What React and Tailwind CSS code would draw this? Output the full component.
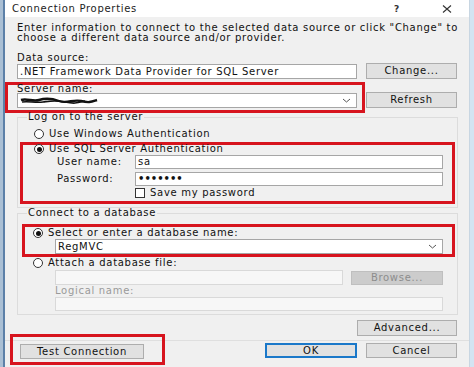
import React from "react";

function Radio({ checked }) {
  return (
    <span className="w-[10px] h-[10px] shrink-0 rounded-full border border-[#333] bg-white flex items-center justify-center">
      {checked && <span className="w-[5px] h-[5px] rounded-full bg-[#111]" />}
    </span>
  );
}

function Chevron() {
  return (
    <svg width="9" height="5" viewBox="0 0 9 5" className="ml-auto mr-[5px] shrink-0">
      <path d="M1 1 L4.5 4 L8 1" fill="none" stroke="#555" strokeWidth="1" />
    </svg>
  );
}

function Btn({ className = "", children }) {
  return (
    <div
      className={
        "border border-[#adadad] bg-[#e1e1e1] flex items-center justify-center leading-[10px] shrink-0 whitespace-nowrap " +
        className
      }
    >
      {children}
    </div>
  );
}

export default function App() {
  return (
    <div className="w-[474px] h-[367px] flex overflow-hidden font-['DejaVu_Sans',sans-serif] text-[10px] tracking-[0.7px] text-[#111]">
      <div className="w-[5px] bg-[#aabfd4] border-r-2 border-[#5c80a8]" />
      <div className="flex-1 flex flex-col bg-[#f0f0f0]">
        {/* title bar */}
        <div className="h-[17px] shrink-0 bg-white flex items-center pl-[7px]">
          <span className="text-[#222] leading-[10px]">Connection Properties</span>
          <div className="ml-auto mr-[17px] w-[58px] flex items-center justify-between">
            <span className="text-[#333] text-[9px] leading-[10px] font-bold tracking-[0px]">?</span>
            <svg width="10" height="8" viewBox="0 0 10 8" className="shrink-0">
              <path d="M1 0.5 L9 7.5 M9 0.5 L1 7.5" stroke="#333" strokeWidth="1.1" />
            </svg>
          </div>
        </div>

        <div className="flex-1 pl-[12px] pr-[11px] flex flex-col">
          <div className="mt-[6px] leading-[10px] whitespace-nowrap">
            Enter information to connect to the selected data source or click "Change" to
            <br />
            choose a different data source and/or provider.
          </div>

          <div className="mt-[10px] leading-[10px]">Data source:</div>
          <div className="flex items-start">
            <div className="mt-[1px] h-[15px] w-[340px] border border-[#a6a6a6] bg-white pl-[2px] leading-[13px] whitespace-nowrap">
              .NET Framework Data Provider for SQL Server
            </div>
            <Btn className="ml-[9px] w-[91px] h-[16px]">Change...</Btn>
          </div>

          {/* server name */}
          <div className="mt-[3px] flex items-end">
            <div className="ml-[-12px] w-[360px] border-[3px] border-[#d7141e] pl-[9px] pr-[5px] pb-[2px]">
              <div className="leading-[8px]">Server name:</div>
              <div className="h-[15px] w-full border border-[#a6a6a6] bg-white flex items-center">
                <svg width="80" height="10" viewBox="0 0 80 10" className="ml-[1px]">
                  <path
                    d="M2 4 C8 2 14 6 20 4 S32 2 40 5 S54 3 62 5 S72 6 78 4"
                    fill="none"
                    stroke="#111"
                    strokeWidth="2.4"
                  />
                  <path
                    d="M3 6 C10 5 16 7 24 6 S36 4 46 6 S58 7 66 5"
                    fill="none"
                    stroke="#111"
                    strokeWidth="1.6"
                  />
                </svg>
                <Chevron />
              </div>
            </div>
            <Btn className="ml-[1px] mb-[5px] w-[91px] h-[16px]">Refresh</Btn>
          </div>

          {/* log on group */}
          <fieldset className="mt-[-1px] w-[441px] border border-[#dcdcdc] pb-[3px]">
            <legend className="ml-[9px] px-[1px] leading-[10px]">Log on to the server</legend>
            <div className="mt-[7px] ml-[16px] h-[10px] flex items-center gap-[5px]">
              <Radio />
              <span className="leading-[10px]">Use Windows Authentication</span>
            </div>
            <div className="mt-[3px] ml-[2px] w-[435px] border-[3px] border-[#d7141e] pl-[11px] pb-[3px]">
              <div className="h-[8px] flex items-center gap-[5px]">
                <Radio checked />
                <span className="leading-[10px]">Use SQL Server Authentication</span>
              </div>
              <div className="mt-[2px] flex items-center">
                <span className="w-[101px] pl-[23px] leading-[10px]">User name:</span>
                <div className="w-[308px] h-[14px] border border-[#a6a6a6] bg-white pl-[2px] leading-[12px]">
                  sa
                </div>
              </div>
              <div className="mt-[3px] flex items-center">
                <span className="w-[101px] pl-[23px] leading-[10px]">Password:</span>
                <div className="w-[308px] h-[14px] border border-[#a6a6a6] bg-white pl-[2px] leading-[12px] tracking-[0px] font-bold">
                  •••••••
                </div>
              </div>
              <div className="mt-[2px] ml-[101px] h-[10px] flex items-center gap-[5px]">
                <span className="w-[10px] h-[10px] border border-[#333] bg-white" />
                <span className="leading-[10px]">Save my password</span>
              </div>
            </div>
          </fieldset>

          {/* database group */}
          <fieldset className="w-[441px] border border-[#dcdcdc] pb-[3px]">
            <legend className="ml-[9px] px-[1px] leading-[10px]">Connect to a database</legend>
            <div className="mt-[6px] ml-[4px] w-[433px] border-[3px] border-[#d7141e] pl-[8px]">
              <div className="mt-[1px] h-[10px] flex items-center gap-[5px]">
                <Radio checked />
                <span className="leading-[10px]">Select or enter a database name:</span>
              </div>
              <div className="mt-[1px] ml-[22px] w-[388px] h-[15px] border border-[#a6a6a6] bg-white flex items-center pl-[2px]">
                <span className="leading-[12px]">RegMVC</span>
                <Chevron />
              </div>
            </div>
            <div className="mt-[1px] ml-[15px] h-[10px] flex items-center gap-[5px]">
              <Radio />
              <span className="leading-[10px]">Attach a database file:</span>
            </div>
            <div className="mt-[2px] ml-[37px] flex items-center">
              <div className="w-[288px] h-[15px] border border-[#d9d9d9] bg-[#f7f7f7]" />
              <div className="ml-[8px] w-[92px] h-[14px] border border-[#bfbfbf] bg-[#cccccc] text-[#8c8c8c] flex items-center justify-center leading-[10px]">
                Browse...
              </div>
            </div>
            <div className="mt-[1px] ml-[37px] leading-[10px] text-[#9a9a9a]">Logical name:</div>
            <div className="mt-[1px] ml-[37px] w-[388px] h-[14px] border border-[#d9d9d9] bg-[#f7f7f7]" />
          </fieldset>

          <Btn className="mt-[5px] self-end mr-[1px] w-[100px] h-[16px]">Advanced...</Btn>

          {/* footer */}
          <div className="mt-[4px] ml-[-12px] mr-[-11px] border-t border-[#dfdfdf] pl-[5px] flex items-start flex-1">
            <div className="mt-[-7px] w-[155px] h-[31px] border-[3px] border-[#d7141e] pt-[7px] pl-[7px]">
              <Btn className="w-[124px] h-[15px]">Test Connection</Btn>
            </div>
            <div className="mt-[2px] ml-[100px] w-[92px] h-[15px] border-2 border-[#1a78c9] bg-[#e1e1e1] flex items-center justify-center leading-[10px]">
              OK
            </div>
            <Btn className="mt-[2px] ml-[9px] w-[91px] h-[15px]">Cancel</Btn>
          </div>
        </div>
      </div>
      <div className="w-[5px] bg-[#d3e4f2] border-l border-[#c8d6e2]" />
    </div>
  );
}
